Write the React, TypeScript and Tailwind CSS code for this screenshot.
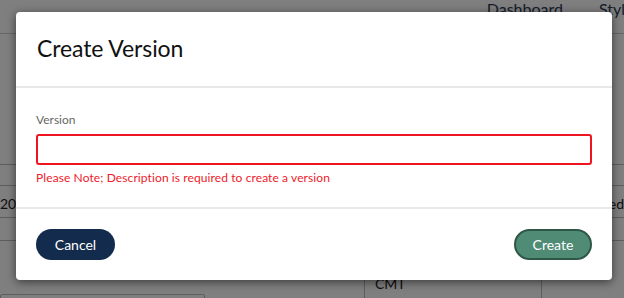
import React from "react";

const font = { fontFamily: '"Source Sans Pro", Lato, "Liberation Sans", sans-serif' };

export default function App() {
  return (
    <div className="relative w-[624px] h-[298px] overflow-hidden bg-white" style={font}>
      {/* background page */}
      <div className="flex flex-col">
        <div className="h-[34px] border-b border-[#cfcfcf] flex items-start justify-end gap-[36px] text-[16px] text-[#2b3a55] leading-[20px]">
          <span className="-mt-[1px]">Dashboard</span>
          <span className="-mt-[1px] w-[25px] overflow-hidden whitespace-nowrap">Style</span>
        </div>
        <div className="h-[130px]" />
        <div className="h-[21px] border-t border-[#bdbdbd]" />
        <div className="h-[32px] border-t border-[#bdbdbd] flex items-center justify-between text-[14px] text-[#222]">
          <span className="pt-[3px]">2024</span>
          <span className="pt-[3px]">Signed</span>
        </div>
        <div className="h-[23px] border-t border-[#bdbdbd]" />
        <div className="h-[32px] border-t border-[#bdbdbd]" />
        <div className="flex">
          <div className="w-[364px] flex flex-col">
            <div className="h-[22px]" />
            <div className="w-[205px] h-[10px] border border-[#bdbdbd] rounded-[2px]" />
          </div>
          <div className="w-[178px] border-l border-r border-[#bdbdbd] pl-[10px] pt-[2px] text-[14px] text-[#222] leading-[20px]">
            CMT
          </div>
        </div>
      </div>

      {/* overlay */}
      <div className="absolute inset-0 bg-black/50" />

      {/* modal */}
      <div className="absolute left-[16px] top-[12px] w-[596px] h-[268px] bg-white rounded-[4px] shadow-[0_2px_10px_rgba(0,0,0,0.55)] flex flex-col">
        <div className="h-[76px] flex items-center px-[21px] pb-[2px] border-b-2 border-[#e8e8e8]">
          <h2 className="text-[23px] text-[#111] leading-[30px] tracking-[-0.1px]">Create Version</h2>
        </div>
        <div className="h-[121px] px-[20px] pt-[24px] border-b-2 border-[#e8e8e8] flex flex-col">
          <label className="text-[12px] leading-[16px] text-[#666]">Version</label>
          <div className="mt-[6px] h-[31px] border-2 border-[#ee1520] rounded-[3px]" />
          <p className="mt-[5px] text-[12px] leading-[16px] text-[#ee1a2a] tracking-[0.1px]">
            Please Note; Description is required to create a version
          </p>
        </div>
        <div className="flex-1 flex items-center justify-between px-[20px]">
          <button className="w-[79px] h-[31px] rounded-full bg-[#132b4d] text-white text-[14px]">
            Cancel
          </button>
          <button className="w-[78px] h-[31px] rounded-full bg-[#508b76] border-2 border-[#2e5747] text-white text-[14px]">
            Create
          </button>
        </div>
      </div>
    </div>
  );
}
